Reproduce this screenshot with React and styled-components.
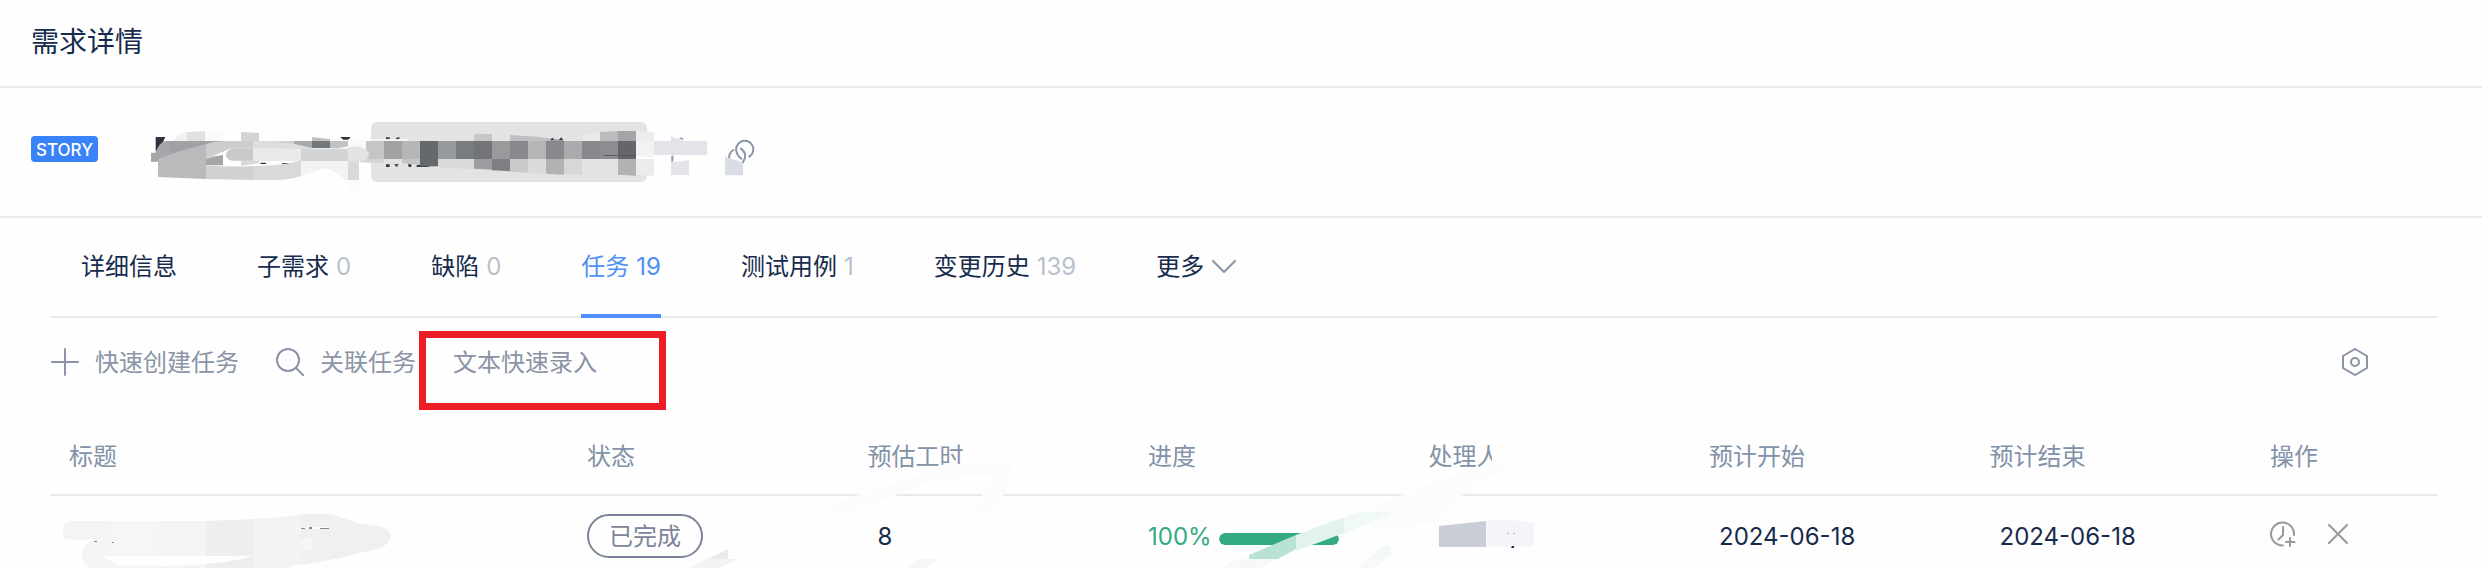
import React from "react";
import styled, { createGlobalStyle } from "styled-components";

const ink = "#172b4d";
const muted = "#8a94a6";
const line = "#e8e8ed";
const blue = "#4f8ff7";
const green = "#34aa82";

const GlobalStyle = createGlobalStyle`
  * { box-sizing: border-box; }
  body {
    margin: 0;
    background: #fefefe;
    color: ${ink};
    font-family: Inter, "Noto Sans CJK SC", sans-serif;
    font-size: 24px;
    line-height: 36px;
  }
`;

const PageHeader = styled.header`
  display: flex;
  align-items: center;
  height: 88px;
  padding: 0 31px 2px;
  border-bottom: 2px solid ${line};
`;

const PageTitle = styled.h1`
  margin: 0;
  font-size: 28px;
  font-weight: 400;
  line-height: 40px;
`;

const StoryBar = styled.section`
  display: flex;
  align-items: center;
  padding: 12px 31px 18px;
  border-bottom: 2px solid ${line};
`;

const Badge = styled.span`
  display: flex;
  align-items: center;
  justify-content: center;
  width: 67px;
  height: 26px;
  margin-right: 32px;
  padding-top: 2px;
  border-radius: 4px;
  background: #3a82f7;
  color: #fff;
  font-size: 17px;
  font-weight: 500;
`;

const IconButton = styled.button`
  display: flex;
  padding: 0;
  border: 0;
  background: none;
  color: ${(p) => p.$color || muted};
  cursor: pointer;
`;

const Content = styled.main`
  padding: 0 45px 0 51px;
`;

const Tabs = styled.nav`
  display: flex;
  gap: 80px;
  height: 100px;
  padding-left: 30px;
  border-bottom: 2px solid ${line};
`;

const Tab = styled.a`
  position: relative;
  display: flex;
  align-items: center;
  gap: 7px;
  height: 98px;
  color: ${(p) => (p.$active ? blue : ink)};
  text-decoration: none;
  white-space: nowrap;

  &::after {
    content: "";
    position: absolute;
    left: 0;
    right: 0;
    bottom: -2px;
    height: 4px;
    background: ${(p) => (p.$active ? blue : "transparent")};
  }
`;

const Count = styled.span`
  color: ${(p) => (p.$active ? "inherit" : "#b9c0cc")};
`;

const MoreButton = styled.button`
  display: flex;
  align-items: center;
  gap: 8px;
  height: 98px;
  padding: 0;
  border: 0;
  background: none;
  color: ${ink};
  font: inherit;
  cursor: pointer;
`;

const Toolbar = styled.div`
  display: flex;
  align-items: center;
  gap: 37px;
  height: 88px;
  margin-bottom: 12px;
  padding-right: 69px;
`;

const ToolButton = styled.button`
  position: relative;
  display: flex;
  align-items: center;
  gap: 16px;
  height: 88px;
  padding: 0;
  border: 0;
  background: none;
  color: ${muted};
  font: inherit;
  white-space: nowrap;
  cursor: pointer;
`;

const ToolLabel = styled.span`
  padding-top: 2px;
`;

const Highlight = styled.span`
  position: absolute;
  top: 13px;
  left: -34px;
  width: 247px;
  height: 79px;
  border: 7px solid #ee1c25;
  pointer-events: none;
`;

const Spacer = styled.div`
  flex: 1;
`;

const Table = styled.table`
  width: 100%;
  table-layout: fixed;
  border-collapse: separate;
  border-spacing: 0;
`;

const Column = styled.col`
  width: ${(p) => p.$width || "auto"};
`;

const HeadCell = styled.th`
  height: 78px;
  padding: 2px 18px 0;
  border-bottom: 2px solid ${line};
  color: #8292a8;
  font-weight: 400;
  text-align: left;
`;

const Cell = styled.td`
  position: relative;
  height: 72px;
  padding: 10px ${(p) => (p.$inset ? 28 : 18)}px 0;
  white-space: nowrap;
`;

const Status = styled.span`
  display: flex;
  align-items: center;
  justify-content: center;
  width: 116px;
  height: 44px;
  margin-bottom: 2px;
  padding-top: 2px;
  border: 2px solid #7a8499;
  border-radius: 22px;
  color: #7a8499;
`;

const Progress = styled.div`
  display: flex;
  align-items: center;
  gap: 7px;
  color: ${green};
`;

const Track = styled.div`
  width: 120px;
  height: 12px;
  margin-top: 4px;
  border-radius: 6px;
  background: #e6eaf0;
  overflow: hidden;
`;

const Fill = styled.div`
  height: 100%;
  border-radius: 6px;
  background: ${green};
`;

const Actions = styled.div`
  display: flex;
  align-items: center;
  gap: 32px;
  padding-bottom: 6px;
`;

const Smudge = styled.svg`
  position: absolute;
  left: ${(p) => p.$left}px;
  top: ${(p) => p.$top}px;
  pointer-events: none;
`;

const band = [
  [708, "#c4c5c6"], [762, "#a1a2a4"], [816, "#b5b6b7"], [870, "#65686d"],
  [924, "#98999b"], [978, "#777c7f"], [1032, "#737478"], [1086, "#999a9c"],
  [1140, "#88898d"], [1194, "#b4b5b6"], [1248, "#88898d"], [1302, "#aaabac"],
  [1356, "#88898d"], [1410, "#8c8d8f"], [1464, "#64666b"], [1518, "#f2f2f2"],
];

const lower = [
  [1032, 209, "#9d9da0"], [1086, 214, "#807f85"], [1140, 218, "#c9c9ca"],
  [1194, 221, "#dadada"], [1248, 224, "#b1b2b4"], [1302, 225, "#d7d7d7"],
  [1464, 227, "#b1b2b4"], [1518, 227, "#ececec"],
];

function StoryMosaic() {
  return (
    <svg width="595" height="98" viewBox="0 0 1785 294" aria-hidden="true">
      <rect x="723" y="66" width="828" height="180" rx="18" fill="#e3e3e3" />
      <path d="M77 111H106L98 128L77 155Z" fill="#30333d" />
      <path d="M119 123H129V128H119ZM630 111H662L655 119H640Z" fill="#30333d" />
      <path d="M130 123Q142 99 171 97V123Z" fill="#eff1f1" />
      <path d="M171 97L225 93V123H171Z" fill="#e1e1e1" />
      <path d="M225 93L279 95V123H225Z" fill="#fafafa" />
      <path d="M333 96L387 99V123H333Z" fill="#d3d4d6" />
      <path d="M546 111L600 117V123H546Z" fill="#bfc1c3" />
      <path d="M63 158H77Q85 130 106 123H279L228 177L63 186Z" fill="#a6a7aa" />
      <path d="M118 123H279L228 140L118 170Z" fill="#a0a1a4" />
      <path d="M84 177Q150 150 228 132V237L84 231Z" fill="#b9babb" />
      <path d="M228 132Q250 125 279 123H369V146H300L228 177Z" fill="#cccdcf" />
      <path d="M228 177Q250 168 279 165V196H228Z" fill="#a5a6a8" />
      <path d="M369 123H438L513 146H369Z" fill="#dcdddf" />
      <path d="M438 123H492V132H450Z" fill="#cfd1d2" />
      <path d="M438 125L492 132L546 144V147H438Z" fill="#dcdddf" />
      <path d="M492 123H546V144L492 132Z" fill="#a7aaac" />
      <rect x="546" y="123" width="54" height="21" fill="#74777c" />
      <path d="M600 123H654V139L625 145H600Z" fill="#c1c3c3" />
      <rect x="654" y="119" width="54" height="24" fill="#fafafa" />
      <path d="M333 182H387V190L333 197Z" fill="#d7d8d9" />
      <path d="M393 188H408V192H390ZM455 189H482L473 193H460Z" fill="#30333d" />
      <path d="M228 196Q300 202 369 198V240L228 237Z" fill="#d0d1d3" />
      <path d="M369 198Q440 199 513 182V228Q470 241 440 240H369Z" fill="#d8d9db" />
      <path d="M513 182H654V250Q620 213 586 204L513 227Z" fill="#f3f3f3" />
      <rect x="654" y="182" width="33" height="58" fill="#d9d9da" />
      <path d="M648 240H687V270Q678 278 660 275Z" fill="#fbfbfb" />
      <path d="M306 146H369V182H306Q288 178 288 164T306 146Z" fill="#c8c9cb" />
      <rect x="369" y="146" width="144" height="37" fill="#e9e9e9" />
      <rect x="513" y="146" width="141" height="37" fill="#d3d4d6" />
      <path d="M690 177H762V190L690 187Z" fill="#d4d5d6" />
      <path d="M723 117H834V123H723Z" fill="#f4f4f4" />
      <path d="M768 112H779V117H768ZM798 114L808 111V117H798Z" fill="#333640" />
      <path d="M768 193H779V201H768ZM792 193H806L800 201ZM834 193H844V201H836ZM858 198L872 190L900 201H862Z" fill="#333640" />
      {band.map(([x, fill]) => (
        <rect key={x} x={x} y="123" width="54" height="54" fill={fill} />
      ))}
      <path d="M654 143Q678 134 697 143Q717 150 717 164Q714 182 697 183H654Z" fill="#e3e3e3" />
      <path d="M816 177H870V195L816 190Z" fill="#c4c5c6" />
      <rect x="870" y="177" width="54" height="22" fill="#65686d" />
      <path d="M924 177H1032V208L924 202Z" fill="#d9d9d9" />
      {lower.map(([x, bottom, fill]) => (
        <path key={x} d={`M${x} 177H${x + 54}V${bottom}L${x} ${bottom - 3}Z`} fill={fill} />
      ))}
      <rect x="1032" y="102" width="54" height="21" fill="#c7c7c8" />
      <path d="M1140 105Q1220 108 1302 121V123H1140Z" fill="#bfc0c1" />
      <path d="M1262 117L1270 113V119L1286 120L1294 112L1300 121H1262Z" fill="#333640" />
      <path d="M1356 103L1410 96V123H1356Z" fill="#e9e9e9" />
      <path d="M1410 96L1464 93V123H1410Z" fill="#bbbcbd" />
      <rect x="1464" y="93" width="54" height="30" fill="#a4a5a7" />
      <path d="M1518 93L1572 96V123H1518Z" fill="#ededed" />
      <path d="M1420 165H1518V167H1420Z" fill="#4c4f55" />
      <path d="M1518 168L1578 173L1574 177H1518Z" fill="#fefefe" />
      <path d="M1572 123H1731V165H1572Z" fill="#e2e4e9" />
      <path d="M1623 109L1662 123L1731 128V140H1623Z" fill="#e2e4e9" />
      <path d="M1647 116Q1655 107 1662 119Z" fill="#8a96ad" />
      <path d="M1624 167H1631L1630 185H1624Z" fill="#8a96ad" />
      <path d="M1623 185L1677 180V225H1623Z" fill="#e2e4e9" />
      <path d="M1631 167H1648L1665 183L1631 185Z" fill="#fefefe" />
    </svg>
  );
}

function LinkIcon() {
  return (
    <svg width="32" height="98" viewBox="0 0 96 294" aria-hidden="true">
      <g fill="none" stroke="currentColor" strokeWidth="6" strokeLinecap="round">
        <path d="M73 170A26 26 0 1 0 36 160Q40 171 49 176" />
        <path d="M25 150Q10 159 12 182" />
        <path d="M48 146Q70 162 54 187" />
      </g>
      <path d="M0 170L54 188V226H0Z" fill="#d9dde6" />
    </svg>
  );
}

function PlusIcon() {
  return (
    <svg width="28" height="28" viewBox="0 0 28 28" fill="none" stroke="currentColor" strokeWidth="2" strokeLinecap="round" aria-hidden="true">
      <path d="M14 1V27M1 14H27" />
    </svg>
  );
}

function SearchIcon() {
  return (
    <svg width="28" height="28" viewBox="0 0 28 28" fill="none" stroke="currentColor" strokeWidth="2" strokeLinecap="round" aria-hidden="true">
      <circle cx="12" cy="12" r="11" />
      <path d="M20 20L27 27" />
    </svg>
  );
}

function ChevronIcon() {
  return (
    <svg width="24" height="14" viewBox="0 0 24 14" fill="none" stroke={muted} strokeWidth="2" strokeLinecap="round" strokeLinejoin="round" aria-hidden="true">
      <path d="M1 1L12 12L23 1" />
    </svg>
  );
}

function SettingsIcon() {
  return (
    <svg width="26" height="28" viewBox="0 0 26 28" fill="none" stroke="currentColor" strokeWidth="2" aria-hidden="true">
      <path d="M13 1L25 8V20L13 27L1 20V8Z" />
      <circle cx="13" cy="14" r="4" />
    </svg>
  );
}

function ClockPlusIcon() {
  return (
    <svg width="26" height="26" viewBox="0 0 26 26" fill="none" stroke="currentColor" strokeWidth="2" strokeLinecap="round" aria-hidden="true">
      <path d="M24 14A11.5 11.5 0 1 0 13 24.500" />
      <path d="M13 6V14L8.500 18.500M20 17V25M16 21H24.500" />
    </svg>
  );
}

function CloseIcon() {
  return (
    <svg width="20" height="20" viewBox="0 0 20 20" fill="none" stroke="currentColor" strokeWidth="2" strokeLinecap="round" aria-hidden="true">
      <path d="M1 1L19 19M19 1L1 19" />
    </svg>
  );
}

const tabs = [
  { label: "详细信息" },
  { label: "子需求", count: 0 },
  { label: "缺陷", count: 0 },
  { label: "任务", count: 19, active: true },
  { label: "测试用例", count: 1 },
  { label: "变更历史", count: 139 },
];

const columns = [
  { label: "标题", width: "518px" },
  { label: "状态" },
  { label: "预估工时" },
  { label: "进度" },
  { label: "处理人" },
  { label: "预计开始" },
  { label: "预计结束" },
  { label: "操作", width: "185px" },
];

const progress = 100;

export default function App() {
  return (
    <>
      <GlobalStyle />
      <PageHeader>
        <PageTitle>需求详情</PageTitle>
      </PageHeader>
      <StoryBar>
        <Badge>STORY</Badge>
        <StoryMosaic />
        <IconButton aria-label="复制链接">
          <LinkIcon />
        </IconButton>
      </StoryBar>
      <Content>
        <Tabs>
          {tabs.map((tab) => (
            <Tab key={tab.label} href="#" $active={tab.active}>
              {tab.label}
              {tab.count !== undefined && <Count $active={tab.active}>{tab.count}</Count>}
            </Tab>
          ))}
          <MoreButton>
            更多
            <ChevronIcon />
          </MoreButton>
        </Tabs>
        <Toolbar>
          <ToolButton>
            <PlusIcon />
            <ToolLabel>快速创建任务</ToolLabel>
          </ToolButton>
          <ToolButton>
            <SearchIcon />
            <ToolLabel>关联任务</ToolLabel>
          </ToolButton>
          <ToolButton>
            <ToolLabel>文本快速录入</ToolLabel>
            <Highlight />
          </ToolButton>
          <Spacer />
          <IconButton aria-label="设置">
            <SettingsIcon />
          </IconButton>
        </Toolbar>
        <Table>
          <colgroup>
            {columns.map((column) => (
              <Column key={column.label} $width={column.width} />
            ))}
          </colgroup>
          <thead>
            <tr>
              {columns.map((column) => (
                <HeadCell key={column.label} scope="col">{column.label}</HeadCell>
              ))}
            </tr>
          </thead>
          <tbody>
            <tr>
              <Cell>
                <Smudge $left={9} $top={14} width="340" height="58" viewBox="60 510 340 58" aria-hidden="true">
                  <path d="M63 526Q64 521 74 521L111 521V568H90Q82 564 82 555Q84 541 95 540L63 539Z" fill="#f4f4f4" />
                  <rect x="111" y="521" width="47" height="47" fill="#f6f6f6" />
                  <rect x="158" y="521" width="48" height="47" fill="#f4f4f4" />
                  <path d="M206 521L253 519V568H206Z" fill="#eeeeee" />
                  <path d="M253 519Q280 518 301 514V564L284 568H253Z" fill="#f3f3f3" />
                  <path d="M301 514H331L358 523L382 527Q391 531 391 536Q391 543 380 548L340 558L301 565Z" fill="#f0f0f0" />
                  <path d="M100 556H253Q225 565 158 566L120 565Z" fill="#fefefe" />
                  <path d="M296 528L308 527H329V529H296Z" fill="#fefefe" />
                  <path d="M301 528H305V529H301ZM309 527H312V529H309ZM320 528H329V529H320ZM94 541H97V542H94ZM112 542H114V543H112Z" fill="#888" />
                  <rect x="301" y="538" width="11" height="13" rx="4" fill="#f6f6f6" />
                </Smudge>
              </Cell>
              <Cell>
                <Status>已完成</Status>
                <Smudge $left={116} $top={52} width="60" height="20" viewBox="685 548 60 20" aria-hidden="true">
                  <path d="M690 568L728 549V559L712 568Z" fill="#e9eaee" />
                  <path d="M706 559H740L718 568H690Z" fill="#f3f3f4" />
                </Smudge>
              </Cell>
              <Cell $inset>
                8
                <Smudge $left={-40} $top={-33} width="210" height="105" viewBox="810 463 210 105" aria-hidden="true">
                  <path d="M815 512L870 490L918 475Q945 464 960 464H1013Q1012 475 1004 494L992 512H970L984 493L994 477Q960 475 930 482L852 512Z" fill="#fcfcfc" />
                  <path d="M918 559H939L925 568H907Z" fill="#f7f7f7" />
                </Smudge>
              </Cell>
              <Cell>
                <Progress>
                  {progress}%
                  <Track role="progressbar" aria-label="进度" aria-valuenow={progress}>
                    <Fill style={{ width: `${progress}%` }} />
                  </Track>
                </Progress>
                <Smudge $left={79} $top={-43} width="320" height="115" viewBox="1210 453 320 115" aria-hidden="true">
                  <path d="M1493 453H1503V472H1484V466L1493 462Z" fill="#fefefe" />
                  <path d="M1360 512L1440 480L1490 464H1522Q1490 475 1470 490L1440 515V520L1410 528H1370Z" fill="#fcfcfc" />
                  <path d="M1250 555L1297 535V549L1279 559H1250Z" fill="#b8e2d3" />
                  <path d="M1297 535L1345 517V533L1297 551Z" fill="#e2f3ed" />
                  <path d="M1345 517L1360 512H1392V513L1345 534Z" fill="#f0f9f6" />
                  <path d="M1376 553L1385 545L1392 547V556L1382 559H1370Z" fill="#f0f9f6" />
                  <path d="M1221 568L1240 559H1279L1260 568ZM1370 559H1388L1374 568H1358Z" fill="#f7f8f8" />
                </Smudge>
              </Cell>
              <Cell>
                <Smudge $left={25} $top={22} width="100" height="30" viewBox="1436 518 100 30" aria-hidden="true">
                  <path d="M1439 526L1486 521V547H1439Z" fill="#c9cdd6" />
                  <path d="M1486 521Q1510 518 1534 523V546L1486 547Z" fill="#f4f5f8" />
                  <path d="M1507 533H1509V534H1507ZM1513 533H1515V534H1513Z" fill="#b4b8c2" />
                  <path d="M1512 546H1514V548H1511Z" fill={ink} />
                </Smudge>
              </Cell>
              <Cell $inset>2024-06-18</Cell>
              <Cell $inset>2024-06-18</Cell>
              <Cell>
                <Actions>
                  <IconButton $color="#999999" aria-label="登记工时">
                    <ClockPlusIcon />
                  </IconButton>
                  <IconButton $color="#999999" aria-label="移除">
                    <CloseIcon />
                  </IconButton>
                </Actions>
              </Cell>
            </tr>
          </tbody>
        </Table>
      </Content>
    </>
  );
}
